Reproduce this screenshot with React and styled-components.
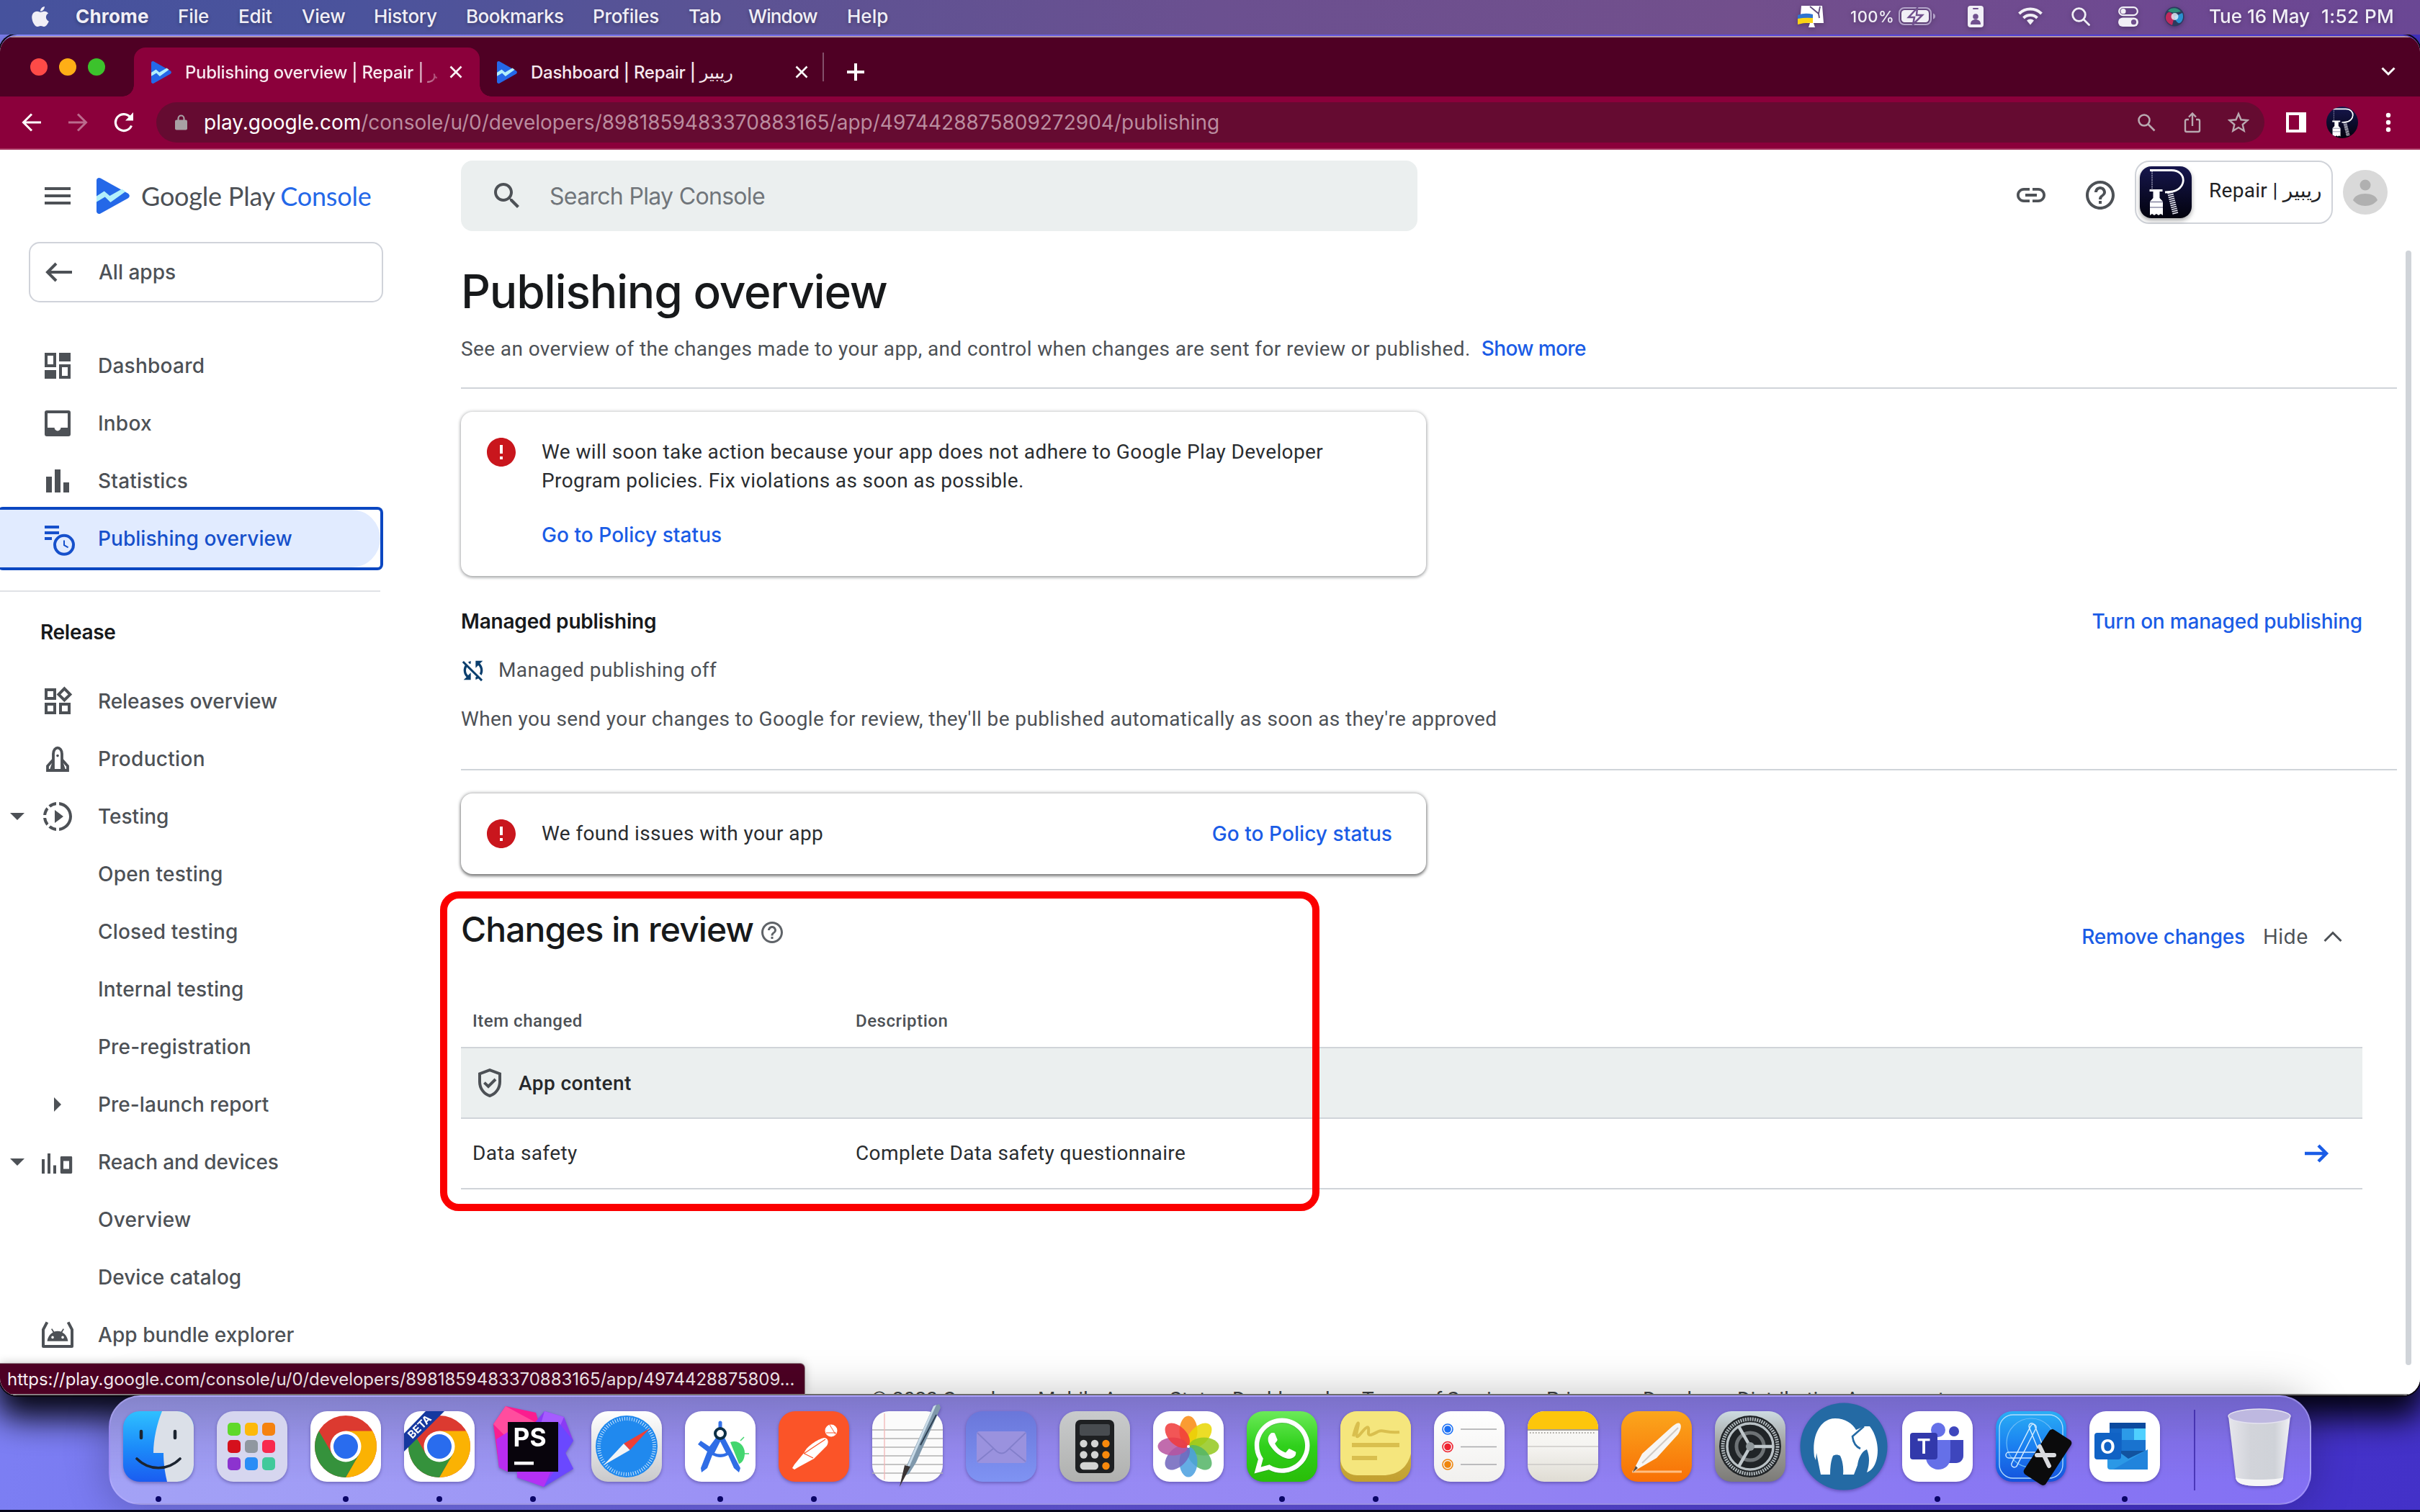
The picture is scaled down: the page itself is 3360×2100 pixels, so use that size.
import React from "react";
import styled, { createGlobalStyle } from "styled-components";
import { FaApple, FaWhatsapp } from "react-icons/fa";

const UI = `Inter, "DejaVu Sans", sans-serif`;
const BODY = `Roboto, "DejaVu Sans", sans-serif`;
const BLUE = "#1a5ce6";
const GREY = "#4d5156";
const INK = "#17191b";
const LINE = "#d0d4d9";

const GlobalStyle = createGlobalStyle`
  * { box-sizing: border-box; }
  body { margin: 0; background: #000; overflow: hidden; }
  svg { display: block; flex: none; }
`;

/* ---------- desktop ---------- */

const Desktop = styled.div`
  position: relative;
  display: flex;
  flex-direction: column;
  width: 3360px;
  height: 2100px;
  overflow: hidden;
  border-bottom: 3px solid #06061a;
  background: linear-gradient(100deg, #8487fb 0%, #7d80f4 8%, #6a60e2 40%, #5c4bdc 65%, #4634cc 90%, #4331c8 100%);
  font-family: ${UI};
`;

const MenuBar = styled.div`
  position: relative;
  z-index: 2;
  display: flex;
  align-items: center;
  height: 48px;
  flex: none;
  padding: 0 38px 3px 40px;
  background: linear-gradient(90deg, #46529d 0%, #4b539c 15%, #5b5394 30%, #6b5090 50%, #724f8c 72%, #6d4892 92%, #6a4794 100%);
  color: #f1eff6;
  font-weight: 500;
  font-size: 26px;
  white-space: pre;
`;

const MenuItem = styled.span`
  width: ${(p) => p.$w}px;
  font-weight: ${(p) => (p.$bold ? 700 : 500)};
  letter-spacing: ${(p) => p.$ls || 0}px;
  text-shadow: 0 2px 5px rgba(0, 0, 0, 0.3);
`;

const AppleSlot = styled.div`
  width: 65px;
  display: flex;
`;

const StatusTray = styled.div`
  display: flex;
  align-items: center;
  margin-left: auto;
  filter: drop-shadow(0 2px 3px rgba(0, 0, 0, 0.25));
`;

const TrayItem = styled.span`
  display: block;
  width: ${(p) => p.$w}px;
  margin-left: ${(p) => p.$gap || 0}px;
  font-size: ${(p) => p.$size || 26}px;
  letter-spacing: ${(p) => p.$ls || 0}px;
`;

/* ---------- browser ---------- */

const BrowserWindow = styled.div`
  position: relative;
  display: flex;
  flex-direction: column;
  height: 1888px;
  flex: none;
  margin-top: 2px;
  border-radius: 22px 22px 24px 24px;
  overflow: hidden;
  background: #fff;
`;

const WindowShadow = styled.div`
  flex: none;
  border-radius: 24px;
  box-shadow: 0 0 0 2px #0b0610, 0 26px 44px 6px rgba(0, 0, 8, 0.95);
`;

const TabStrip = styled.div`
  display: flex;
  align-items: center;
  height: 84px;
  flex: none;
  padding-left: 42px;
  background: #4f0024;
  border-top: 2px solid #b597a4;
`;

const Lights = styled.div`
  display: flex;
  gap: 16px;
  width: 144px;
`;

const Light = styled.i`
  width: 24px;
  height: 24px;
  border-radius: 50%;
  background: ${(p) => p.$c};
`;

const Tab = styled.div`
  position: relative;
  display: flex;
  align-items: center;
  align-self: flex-end;
  width: 480px;
  height: 68px;
  padding: 0 18px 0 24px;
  border-radius: 16px 16px 0 0;
  background: ${(p) => (p.$active ? "#8b003b" : "transparent")};
  color: #fff;
  font-weight: 500;
  font-size: 24px;
  letter-spacing: -0.28px;
  ${(p) =>
    p.$active &&
    `
    &::before, &::after {
      content: "";
      position: absolute;
      bottom: 0;
      width: 16px;
      height: 16px;
    }
    &::before { left: -16px; background: radial-gradient(circle at 0 0, transparent 15.5px, #8b003b 16px); }
    &::after { right: -16px; background: radial-gradient(circle at 100% 0, transparent 15.5px, #8b003b 16px); }
  `}
`;

const TabTitle = styled.span`
  width: 350px;
  margin: 0 17px 0 19px;
  overflow: hidden;
  white-space: pre;
  color: #f6e9ef;
  ${(p) => p.$fade && `mask-image: linear-gradient(90deg, #000 90%, transparent 104%);`}
`;

const TabDivider = styled.i`
  width: 2px;
  height: 40px;
  margin: 0 32px 0 -4px;
  background: #83506a;
`;

const NewTab = styled.div`
  margin: 13px 0 0 -1px;
`;

const ChevronSlot = styled.div`
  margin: 13px 34px 0 auto;
`;

const Toolbar = styled.div`
  display: flex;
  align-items: center;
  height: 74px;
  flex: none;
  padding-left: 20px;
  background: #8b003b;
  border-bottom: 2px solid #a8345f;
`;

const ToolIcon = styled.div`
  display: flex;
  align-items: center;
  justify-content: center;
  width: 48px;
  height: 48px;
  margin-right: 16px;
  opacity: ${(p) => (p.$dim ? 0.42 : 1)};
`;

const Omnibox = styled.div`
  display: flex;
  align-items: center;
  width: 2927px;
  height: 56px;
  margin: 0 20px 0 5px;
  padding: 0 0 0 26px;
  border-radius: 28px;
  background: #650b31;
  color: #ba8c9f;
  font-size: 28px;
`;

const Url = styled.span`
  margin-left: 23px;
  margin-right: auto;
  b {
    font-weight: 400;
    color: #fff;
  }
`;

const OmniIcon = styled.div`
  display: flex;
  justify-content: center;
  width: 64px;
  &:last-child {
    margin-right: 4px;
  }
`;

const ProfileDot = styled.div`
  width: 44px;
  height: 44px;
  margin: 0 38px 0 2px;
  border-radius: 50%;
  overflow: hidden;
`;

/* ---------- page ---------- */

const Page = styled.div`
  position: relative;
  display: grid;
  grid-template-columns: 640px 1fr;
  flex: 1;
  min-height: 0;
  overflow: hidden;
  background: #fff;
  border-bottom: 2px solid #7c7c7c;
`;

const Sidebar = styled.nav`
  display: flex;
  flex-direction: column;
  min-height: 0;
`;

const BrandRow = styled.div`
  display: flex;
  align-items: center;
  height: 128px;
  flex: none;
  padding-left: 56px;
`;

const Brand = styled.div`
  margin-left: 16px;
  font-family: Lato, sans-serif;
  font-size: 36px;
  letter-spacing: -0.2px;
  color: ${GREY};
  span {
    color: #2468e8;
    margin-left: -1px;
  }
`;

const LogoSlot = styled.div`
  margin-left: 30px;
`;

const AllApps = styled.div`
  display: flex;
  align-items: center;
  width: 492px;
  height: 84px;
  flex: none;
  margin: 0 0 48px 40px;
  padding-left: 16px;
  border: 2px solid #d0d3da;
  border-radius: 15px;
  font-weight: 500;
  font-size: 28px;
  color: ${GREY};
  svg {
    margin-right: 31px;
  }
`;

const NavItem = styled.div`
  display: grid;
  grid-template-columns: 56px 48px 1fr;
  align-items: center;
  width: 528px;
  height: 80px;
  flex: none;
  color: ${(p) => (p.$active ? "#1650cb" : GREY)};
  font-weight: 500;
  font-size: 28px;
  letter-spacing: ${(p) => p.$ls ?? 0.05}px;
  ${(p) =>
    p.$active &&
    `
    background: #e1ebff;
    border-radius: 0 40px 40px 0;
  `}
`;

const FocusRing = styled.div`
  width: 536px;
  height: 88px;
  flex: none;
  margin: -4px 0 -4px -4px;
  padding-left: 4px;
  border: 4px solid #0b47c1;
  border-left: 0;
  border-radius: 8px;
`;

const CaretSlot = styled.div`
  padding-left: 14px;
`;

const IconSlot = styled.div`
  display: flex;
  justify-content: center;
`;

const NavLabel = styled.span`
  padding-left: 32px;
`;

const NavDivider = styled.hr`
  width: 528px;
  height: 2px;
  flex: none;
  margin: 32px 0 0;
  border: 0;
  background: #e0e2e6;
`;

const NavHeading = styled.div`
  display: flex;
  align-items: center;
  height: 112px;
  flex: none;
  padding-left: 56px;
  font-weight: 600;
  font-size: 28px;
  letter-spacing: -0.3px;
  color: ${INK};
`;

const Main = styled.main`
  display: flex;
  flex-direction: column;
  min-height: 0;
  min-width: 0;
  padding-right: 32px;
`;

const TopBar = styled.div`
  display: flex;
  align-items: center;
  height: 128px;
  flex: none;
  margin-right: -32px;
  padding-right: 45px;
`;

const SearchBox = styled.div`
  display: flex;
  align-items: center;
  width: 1328px;
  height: 98px;
  padding-left: 40px;
  margin-right: auto;
  border-radius: 16px;
  background: #ebefef;
  color: #70757a;
  font-size: 32px;
  letter-spacing: -0.68px;
  svg {
    margin-right: 35px;
  }
`;

const AppChip = styled.div`
  display: flex;
  align-items: center;
  width: 275px;
  height: 88px;
  margin: 0 14px 10px 24px;
  padding-left: 5px;
  border: 2px solid #d0d3d9;
  border-radius: 20px;
  font-family: ${BODY};
  font-size: 28px;
  letter-spacing: 0.3px;
  color: #202124;
  white-space: pre;
`;

const AppName = styled.span`
  padding-bottom: 5px;
`;

const AppTile = styled.div`
  width: 72px;
  height: 72px;
  margin-right: 24px;
  border-radius: 16px;
  overflow: hidden;
  box-shadow: 0 3px 6px rgba(0, 0, 0, 0.35);
`;

const Avatar = styled.div`
  margin-bottom: 10px;
`;

const HeaderIcon = styled.div`
  margin: 0 0 2px ${(p) => p.$gap || 0}px;
`;

const Title = styled.h1`
  margin: 29px 0 0;
  font-weight: 540;
  font-size: 64px;
  line-height: 80px;
  letter-spacing: -1.2px;
  color: ${INK};
`;

const Text = styled.p`
  margin: ${(p) => p.$mt || 0}px 0 0;
  font-family: ${BODY};
  font-size: 28px;
  line-height: 40px;
  letter-spacing: 0.39px;
  color: ${(p) => (p.$dark ? "#2a2d30" : GREY)};
  white-space: pre;
`;

const Link = styled.a`
  font-family: ${UI};
  font-weight: 500;
  font-size: 28px;
  line-height: 40px;
  letter-spacing: ${(p) => p.$ls || 0}px;
  color: ${BLUE};
  margin-left: ${(p) => p.$ml || 0}px;
`;

const Rule = styled.hr`
  width: 100%;
  height: 2px;
  flex: none;
  margin: ${(p) => p.$mt}px 0 0;
  border: 0;
  background: ${LINE};
`;

const Notice = styled.section`
  display: flex;
  align-items: ${(p) => (p.$single ? "center" : "flex-start")};
  width: 1340px;
  height: ${(p) => (p.$single ? 112 : 228)}px;
  flex: none;
  margin-top: 32px;
  padding: ${(p) => (p.$single ? "0 47px 0 32px" : "32px 48px 0 32px")};
  border-radius: 16px;
  background: #fff;
  box-shadow: ${(p) =>
    p.$single
      ? "0 3px 4px rgba(0,0,0,.42), 0 0 4px 1px rgba(60,64,67,.38)"
      : "0 2px 4px rgba(60,64,67,.38), 0 0 4px 1px rgba(60,64,67,.22)"};
`;

const NoticeBody = styled.div`
  display: flex;
  flex-direction: ${(p) => (p.$row ? "row" : "column")};
  justify-content: space-between;
  align-items: ${(p) => (p.$row ? "center" : "flex-start")};
  flex: 1;
  height: ${(p) => (p.$row ? "auto" : "159px")};
  padding: ${(p) => (p.$row ? 0 : 4)}px 0 0 32px;
`;

const SectionRow = styled.div`
  display: flex;
  align-items: ${(p) => p.$align || "center"};
  justify-content: space-between;
  flex: none;
  margin-top: ${(p) => p.$mt}px;
  padding-right: 48px;
`;

const SmallHeading = styled.h3`
  margin: 0;
  font-weight: 600;
  font-size: 28px;
  line-height: 40px;
  letter-spacing: -0.2px;
  color: ${INK};
`;

const StatusLine = styled.div`
  display: flex;
  align-items: center;
  height: 40px;
  flex: none;
  margin: 28px 0 0 -3px;
  gap: 15px;
`;

const SectionTitle = styled.h2`
  display: flex;
  align-items: center;
  gap: 8px;
  margin: 0;
  font-weight: 540;
  font-size: 48px;
  line-height: 60px;
  letter-spacing: -0.95px;
  color: ${INK};
  svg {
    margin-top: 8px;
  }
`;

const Actions = styled.div`
  display: flex;
  align-items: center;
  padding: 20px 28px 0 0;
`;

const Hide = styled.span`
  margin: 0 21px 0 25px;
  font-size: 28px;
  letter-spacing: 0.5px;
  line-height: 40px;
  color: ${GREY};
`;

const Table = styled.div`
  display: flex;
  flex-direction: column;
  flex: none;
  margin: 61px 48px 0 0;
`;

const TableHead = styled.div`
  display: grid;
  grid-template-columns: 532px 1fr;
  align-items: center;
  height: 72px;
  padding-left: 16px;
  font-family: ${BODY};
  font-weight: 500;
  font-size: 24px;
  letter-spacing: 0.52px;
  color: ${GREY};
`;

const GroupRow = styled.div`
  display: flex;
  align-items: center;
  gap: 16px;
  height: 98px;
  padding-left: 16px;
  border-top: 2px solid ${LINE};
  background: #ebefef;
  font-family: ${BODY};
  font-weight: 500;
  font-size: 28px;
  letter-spacing: 0.42px;
  color: #26282b;
`;

const DataRow = styled.div`
  display: grid;
  grid-template-columns: 532px 1fr 48px;
  align-items: center;
  height: 100px;
  padding: 0 40px 0 16px;
  border-top: 2px solid ${LINE};
  border-bottom: 2px solid ${LINE};
`;

const Footer = styled.footer`
  display: flex;
  flex: none;
  margin-top: 272px;
  padding-left: 570px;
  font-family: ${BODY};
  font-size: 28px;
  line-height: 40px;
  color: #3c4043;
  white-space: pre;
`;

const FooterItem = styled.span`
  width: ${(p) => p.$w}px;
`;

const ScrollThumb = styled.div`
  position: absolute;
  right: 12px;
  top: 140px;
  width: 8px;
  height: 1548px;
  border-radius: 4px;
  background: #d0d4d9;
`;

const Highlight = styled.div`
  position: absolute;
  left: 611px;
  top: 1238px;
  width: 1221px;
  height: 444px;
  border: 10px solid #fb0000;
  border-radius: 26px;
`;

const StatusBubble = styled.div`
  position: absolute;
  left: 0;
  bottom: 2px;
  width: 1117px;
  height: 42px;
  padding-left: 10px;
  border-radius: 0 6px 0 0;
  background: #4d0024;
  box-shadow: 0 0 0 1px #9a8a90, 0 0 14px rgba(0, 0, 0, 0.25);
  color: #f6edf1;
  font-size: 24px;
  line-height: 43px;
  letter-spacing: -0.03px;
  white-space: nowrap;
`;

/* ---------- dock ---------- */

const DockBar = styled.div`
  position: absolute;
  left: 151px;
  top: 1938px;
  display: flex;
  width: 3058px;
  height: 152px;
  padding-left: 5px;
  border: 2px solid rgba(190, 180, 255, 0.45);
  border-radius: 44px;
  background: linear-gradient(180deg, rgba(70, 70, 110, 0.32) 0%, rgba(90, 80, 150, 0.12) 45%, transparent 80%),
    linear-gradient(90deg, #a3a2f6 0%, #9a90f5 30%, #9484f3 60%, #8370f3 100%);
  box-shadow: 0 0 60px rgba(0, 0, 0, 0.26);
`;

const DockSlot = styled.div`
  display: flex;
  flex-direction: column;
  align-items: center;
  width: 130px;
  padding-top: 19px;
  margin-left: -3px;
  margin-right: 3px;
  svg {
    overflow: visible;
    filter: drop-shadow(0 2px 2px rgba(20, 10, 80, 0.35));
  }
`;

const RunningDot = styled.i`
  width: 8px;
  height: 8px;
  margin-top: 19px;
  border-radius: 50%;
  background: #0a0566;
`;

const DockDivider = styled.i`
  width: 2px;
  height: 112px;
  margin: 18px 27px 0 28px;
  background: rgba(50, 30, 160, 0.7);
`;

/* ---------- icons ---------- */

const Glyph = ({ size = 48, color = GREY, children, ...rest }) => (
  <svg width={size} height={size} viewBox="0 0 24 24" fill={color} {...rest}>
    {children}
  </svg>
);

const Stroke = ({ size = 48, color = GREY, w = 2, children, ...rest }) => (
  <svg width={size} height={size} viewBox="0 0 24 24" fill="none" stroke={color} strokeWidth={w} {...rest}>
    {children}
  </svg>
);

const P = {
  menu: "M3 18h18v-2H3v2zm0-5h18v-2H3v2zm0-7v2h18V6H3z",
  search:
    "M15.5 14h-.79l-.28-.27C15.41 12.59 16 11.11 16 9.5 16 5.91 13.09 3 9.5 3S3 5.91 3 9.5 5.91 16 9.5 16c1.61 0 3.09-.59 4.23-1.57l.27.28v.79l5 4.99L20.49 19l-4.99-5zm-6 0C7.01 14 5 11.99 5 9.5S7.01 5 9.5 5 14 7.01 14 9.5 11.99 14 9.5 14z",
  link: "M3.9 12c0-1.71 1.39-3.1 3.1-3.1h4V7H7c-2.76 0-5 2.24-5 5s2.24 5 5 5h4v-1.9H7c-1.71 0-3.1-1.39-3.1-3.1zM8 13h8v-2H8v2zm9-6h-4v1.9h4c1.71 0 3.1 1.39 3.1 3.1s-1.39 3.1-3.1 3.1h-4V17h4c2.76 0 5-2.24 5-5s-2.24-5-5-5z",
  help: "M11 18h2v-2h-2v2zm1-16C6.48 2 2 6.48 2 12s4.48 10 10 10 10-4.48 10-10S17.52 2 12 2zm0 18c-4.41 0-8-3.59-8-8s3.59-8 8-8 8 3.59 8 8-3.59 8-8 8zm0-14c-2.21 0-4 1.79-4 4h2c0-1.1.9-2 2-2s2 .9 2 2c0 2-3 1.75-3 5h2c0-2.25 3-2.5 3-5 0-2.21-1.79-4-4-4z",
  error: "M12 2C6.48 2 2 6.48 2 12s4.48 10 10 10 10-4.48 10-10S17.52 2 12 2zm1 15h-2v-2h2v2zm0-4h-2V7h2v6z",
  slowMotion:
    "M13.05 9.79 10 7.5v9l3.05-2.29L16 12l-2.95-2.21zM11 4.07V2.05c-2.01.2-3.84 1-5.32 2.21L7.1 5.69A7.94 7.94 0 0 1 11 4.07zM5.69 7.1 4.26 5.68A9.95 9.95 0 0 0 2.05 11h2.02c.18-1.46.76-2.79 1.62-3.9zM4.07 13H2.05c.2 2.01 1 3.84 2.21 5.32l1.43-1.43A7.868 7.868 0 0 1 4.07 13zm1.61 6.74A9.98 9.98 0 0 0 11 21.95v-2.02a7.94 7.94 0 0 1-3.9-1.62l-1.42 1.43zM22 12c0 5.16-3.92 9.42-8.95 9.95v-2.02C16.97 19.41 20 16.05 20 12s-3.03-7.41-6.95-7.93V2.05C18.08 2.58 22 6.84 22 12z",
  syncOff:
    "M10 6.35V4.26c-.8.21-1.55.54-2.23.96l1.46 1.46c.25-.12.5-.24.77-.33zm-7.14-.94l2.36 2.36C4.45 8.99 4 10.44 4 12c0 2.21.91 4.2 2.36 5.64L4 20h6v-6l-2.24 2.24C6.68 15.15 6 13.66 6 12c0-1 .25-1.94.68-2.77l8.08 8.08c-.25.13-.5.25-.77.34v2.09c.8-.21 1.55-.54 2.23-.96l2.36 2.36 1.27-1.27L4.14 4.14 2.86 5.41zM20 4h-6v6l2.24-2.24C17.32 8.85 18 10.34 18 12c0 1-.25 1.94-.68 2.77l1.46 1.46C19.55 15.01 20 13.56 20 12c0-2.21-.91-4.2-2.36-5.64L20 4z",
};

const NAV_ICONS = {
  dashboard: (
    <Glyph>
      <path fillRule="evenodd" d="M3 3h8v10H3zM5 5v6h4V5zM13 3h8v6h-8zM3 15h8v6H3zM13 11h8v10h-8zM15 13v6h4v-6z" />
    </Glyph>
  ),
  inbox: (
    <Glyph>
      <path fillRule="evenodd" d="M4.5 3h15A1.5 1.5 0 0 1 21 4.5v15a1.5 1.5 0 0 1-1.5 1.5h-15A1.5 1.5 0 0 1 3 19.5v-15A1.5 1.5 0 0 1 4.5 3zM5 5h14v10h-4.8a2.2 2.2 0 0 1-4.4 0H5z" />
    </Glyph>
  ),
  stats: (
    <Glyph>
      <path d="M4 9h4v11H4zM10 4h4v16h-4zM16 13h4v7h-4z" />
    </Glyph>
  ),
  publish: (
    <Glyph color="#1650cb">
      <path d="M3 3h10v2H3zM3 7h10v2H3zM3 11h5v2H3z" />
      <circle cx="16.5" cy="16.4" r="6.5" fill="#e1ebff" stroke="#1650cb" strokeWidth="2" />
      <path d="M16.5 13.2v3.4l2.8 1.6" fill="none" stroke="#1650cb" strokeWidth="1" />
    </Glyph>
  ),
  releases: (
    <Glyph>
      <path fillRule="evenodd" d="M3 3h8v8H3zM5 5v4h4V5zM3 13h8v8H3zM5 15v4h4v-4zM13 13h8v8h-8zM15 15v4h4v-4zM16.7 1.8 22.1 7.2 16.7 12.6 11.3 7.2zM16.7 4.6 14.1 7.2 16.7 9.8 19.3 7.2z" />
    </Glyph>
  ),
  production: (
    <Stroke w={1.9}>
      <path d="M9 20V8.5C9 6 10.5 4.300 12 4.3S15 6 15 8.500V20M9 12.500 5 17v3h14v-3l-4-4.500" />
      <circle cx="12" cy="9.8" r=".9" fill={GREY} stroke="none" />
      <path d="M8.5 15.5 7 20M15.5 15.5 17 20" strokeWidth="1.2" />
    </Stroke>
  ),
  testing: (
    <Glyph>
      <path d={P.slowMotion} />
    </Glyph>
  ),
  reach: (
    <Glyph>
      <path fillRule="evenodd" d="M1 10h2v10H1zM5 6h2v14H5zM9 14.3h2V20H9zM14.6 8h6.8a.7.7 0 0 1 .7.7v10.6a.7.7 0 0 1-.7.7h-6.8a.7.7 0 0 1-.7-.7V8.700a.7.7 0 0 1 .7-.7zM16 11.200v5.600h4v-5.600z" />
    </Glyph>
  ),
  bundle: (
    <Glyph>
      <path d="M4.7 3.2 2 8.3V20h20V8.3L19.3 3.2" fill="none" stroke={GREY} strokeWidth="2" strokeLinejoin="round" />
      <path fillRule="evenodd" d="M4.8 16.4c.3-3 2-5.1 4-6.2L7.5 8l.7-.4 1.4 2.2a8 8 0 0 1 4.8 0l1.4-2.2.7.4-1.3 2.2c2 1.1 3.7 3.2 4 6.2zM8.5 12.8a.9.9 0 1 0 .01 1.8.9.9 0 0 0 0-1.8zM15.5 12.8a.9.9 0 1 0 .01 1.8.9.9 0 0 0 0-1.8z" />
    </Glyph>
  ),
};

const CaretDown = () => (
  <svg width="20" height="10" viewBox="0 0 20 10">
    <path d="M0 0h20L10 10z" fill={GREY} />
  </svg>
);

const CaretRight = () => (
  <svg width="10" height="20" viewBox="0 0 10 20">
    <path d="M0 0v20l10-10z" fill={GREY} />
  </svg>
);

const PlayLogo = ({ w, h }) => (
  <svg width={w} height={h} viewBox="0 0 45 50" preserveAspectRatio="none">
    <path d="M0 3.5C0 .6 3 -.8 5.5.6L42.500 21.500c3 1.800 3 5.400 0 7.100L5.500 49.400C3 50.800 0 49.400 0 46.500z" fill="#2468e8" />
    <path d="M0 25.5 10.500 18.500l7.500 6.500L34.500 15.500l5 3.500L19 34l-7.500-7.500L0 33.500z" fill="#b3f0fb" />
  </svg>
);

const RepairMark = ({ size }) => (
  <svg width={size} height={size} viewBox="0 0 72 72">
    <defs>
      <linearGradient id="navy" x1="0" y1="0" x2="0" y2="1">
        <stop offset="0" stopColor="#16164d" />
        <stop offset="1" stopColor="#02020d" />
      </linearGradient>
    </defs>
    <rect width="72" height="72" fill="url(#navy)" />
    <path d="M14 5.5h30c22 0 22 28-2 30l-7 .5" fill="none" stroke="#fff" strokeWidth="2.8" />
    <path d="M17 7v25" stroke="#c9c9e0" strokeWidth="1.2" strokeDasharray="1.5 1" />
    <path d="M13.5 32h18v3h-4v9l4.500 5v19l-3-2-3 2-3-2-3 2-3-2-3 2V49l4.500-5v-9h-5z" fill="#fff" />
    <path d="M14 49.5h18M14 57h18" stroke="#55557a" strokeWidth="1" />
    <path d="M42 36 49.5 66" stroke="#e4e4ef" strokeWidth="8" strokeDasharray="1.6 1.3" />
  </svg>
);

/* ---------- dock drawings, each on a 100 x 100 tile ---------- */

const Tile = ({ children, fill = "#fff", id, stops }) => (
  <svg width="100" height="100" viewBox="0 0 100 100">
    {stops && (
      <defs>
        <linearGradient id={id} x1="0" y1="0" x2="0" y2="1">
          {stops.map((c, i) => (
            <stop key={i} offset={i / (stops.length - 1)} stopColor={c} />
          ))}
        </linearGradient>
      </defs>
    )}
    <rect x="1" y="1" width="98" height="98" rx="23" fill={stops ? `url(#${id})` : fill} />
    {children}
  </svg>
);

const ChromeDisc = () => (
  <>
    <circle cx="50" cy="50" r="43" fill="#dc3a30" />
    <path d="M87.2 28.5H50L68.6 60.75 50 93A43 43 0 0 0 87.2 28.5z" fill="#fbb203" />
    <path d="M50 93 68.6 60.75H31.4L12.8 28.5A43 43 0 0 0 50 93z" fill="#35923c" />
    <circle cx="50" cy="50" r="21.5" fill="#fff" />
    <circle cx="50" cy="50" r="17" fill="#296cee" />
  </>
);

const Finder = () => (
  <Tile id="dk-finder" stops={["#2fc0ff", "#1c8dfa", "#1a5cf0"]}>
    <path d="M55 1h21a23 23 0 0 1 23 23v52a23 23 0 0 1-23 23H62c-3-12-5-26-5-40H43C43 40 48 18 55 1z" fill="#dbe0e8" />
    <path d="M26 29v9M73 29v9" stroke="#1b2430" strokeWidth="4.5" strokeLinecap="round" />
    <path d="M20 67c17 17 43 17 60 0" fill="none" stroke="#1b2430" strokeWidth="3.6" strokeLinecap="round" />
  </Tile>
);

const PAD = ["#5fd92b", "#fdb90a", "#f5820f", "#d5101c", "#9097a0", "#f8294d", "#8c33cf", "#2a8df6", "#41c99a"];
const Launchpad = () => (
  <Tile fill="#d6d6ef">
    {PAD.map((c, i) => (
      <rect key={i} x={16 + (i % 3) * 24} y={17 + Math.floor(i / 3) * 24} width="18" height="18" rx="5" fill={c} />
    ))}
  </Tile>
);

const Chrome = () => (
  <Tile>
    <ChromeDisc />
  </Tile>
);

const ChromeBeta = () => (
  <Tile>
    <ChromeDisc />
    <path d="M31 1h26L1 57V32z" fill="#15389f" />
    <text x="22" y="28" transform="rotate(-45 22 22)" fill="#fff" fontFamily="Inter, sans-serif" fontWeight="700" fontSize="15" textAnchor="middle">
      BETA
    </text>
  </Tile>
);

const PhpStorm = () => (
  <svg width="100" height="100" viewBox="0 0 100 100">
    <path d="M12-6 54 3l6 20L15 85l-12-6-8-60z" fill="#fb1d8f" />
    <path d="M12-6-5 19l20 20L60 20z" fill="#ff4d9e" />
    <path d="M50 20 66 1l27 8 13 33-11 17 11 22-41 25-37-13V60z" fill="#8a3bf4" />
    <path d="M66 1 93 9 84 30 60 22z" fill="#a65bff" />
    <path d="M85 16 106 42 95 59l11 22-41 25 20-30z" fill="#6a48ff" />
    <path d="M-1 40 15 30v55l-12-6z" fill="#b92cf0" />
    <path d="M28 84v9l37 13 10-22z" fill="#b431f3" />
    <rect x="15" y="16" width="70" height="69" fill="#08040c" />
    <text x="22.5" y="50" fill="#fff" fontFamily="Inter, sans-serif" fontWeight="700" fontSize="36" textLength="46" lengthAdjust="spacingAndGlyphs">
      PS
    </text>
    <rect x="24" y="71" width="27" height="4.5" fill="#fff" />
  </svg>
);

const Safari = () => (
  <Tile id="dk-safari" stops={["#ffffff", "#c9c9cb"]}>
    <circle cx="50" cy="50" r="43" fill="#2089ee" />
    <circle cx="50" cy="50" r="38.5" fill="none" stroke="#cfe8fd" strokeWidth="5" strokeDasharray="1 2.36" />
    <path d="M82 25 54.5 55 46 46z" fill="#ee3f37" />
    <path d="M18 76 46 46l8.5 9z" fill="#f2f4f6" />
  </Tile>
);

const AndroidStudio = () => (
  <Tile>
    <path d="M64 44c12-4 20 6 20 15s-4 14-8 15z" fill="#43d66f" />
    <path d="M78 42l5-5M82 60h8" stroke="#43d66f" strokeWidth="1.5" />
    <path d="M50 17v8" stroke="#3573ea" strokeWidth="5" strokeLinecap="round" />
    <path d="M44 38h12l22 42-2 6-7-6-8-18c-8 4-14 4-22 0l-7 18-8 6-1-6 9-23-13-10 4-5 12 8z" fill="#2f6de6" />
    <path d="M50 43 42 59q8 3 16 0z" fill="#fff" />
    <circle cx="50" cy="32" r="7" fill="#fff" stroke="#0c2f45" strokeWidth="4" />
  </Tile>
);

const Postman = () => (
  <Tile fill="#fb5428">
    <circle cx="74" cy="28" r="8.5" fill="#fff" />
    <path d="M72 20 80 33M67 31h14" stroke="#fb5428" strokeWidth="1" />
    <path d="M64 38c6 0 7 6 4 11L50 67 28 79l-5 3-3-2 3-5 14-17c3-8 18-18 27-20z" fill="#fff" />
    <path d="M36 60 66 40M37 60l12 6" stroke="#fb5428" strokeWidth="1.3" />
  </Tile>
);

const TextEdit = () => (
  <Tile fill="#fbfbfb">
    <path d="M1 27h98M1 39h98M1 51h98M1 63h98M1 75h98M1 87h98" stroke="#b3b3b3" strokeWidth="1.3" />
    <path d="M18 4v92" stroke="#f2b5b5" strokeWidth="1.3" />
    <path d="M86-6 94-9 96-4 62 72 52 88 42 92z" fill="#7f98ab" />
    <path d="M86-6 90-8 50 84 44 90z" fill="#c9dbe8" />
    <path d="M54 78 39 106 46 76z" fill="#3a3434" />
    <path d="M90 6 68 48" stroke="#2c3e50" strokeWidth="1.8" />
  </Tile>
);

const MailApp = () => (
  <Tile id="dk-mail" stops={["#6a77da", "#7f93f3"]}>
    <rect x="16" y="29" width="69" height="44" rx="4" fill="#9a92de" />
    <path d="M17 31 44 57q7 5 13 0L84 31M17 71 39 53M84 71 62 53" fill="none" stroke="#837fcb" strokeWidth="1.8" />
  </Tile>
);

const Calculator = () => (
  <Tile id="dk-calc" stops={["#c9cbcc", "#b0b1af"]}>
    <rect x="23" y="13" width="54" height="74" rx="7" fill="#1e2022" />
    <rect x="29" y="19" width="42" height="16" rx="3" fill="#484c50" />
    {[0, 1, 2].map((r) =>
      [0, 1, 2].map((c) =>
        r === 2 && c < 2 ? null : (
          <circle key={`${r}${c}`} cx={34.5 + c * 15.5} cy={46 + r * 15.5} r="5.2" fill={c === 2 ? "#f8890c" : "#d3d4d3"} />
        )
      )
    )}
    <rect x="29.5" y="71.8" width="25.5" height="10.4" rx="5.2" fill="#d3d4d3" />
  </Tile>
);

const PETALS = ["#f98a12", "#e9d704", "#94c81f", "#54b567", "#4a9fe0", "#7065bd", "#b7549f", "#f03a3a"];
const Photos = () => (
  <Tile>
    {PETALS.map((c, i) => (
      <ellipse key={i} cx="50" cy="28.5" rx="12.5" ry="21" fill={c} fillOpacity="0.86" transform={`rotate(${i * 45} 50 50)`} />
    ))}
    <circle cx="50" cy="50" r="2" fill="#fff" />
  </Tile>
);

const WhatsApp = () => (
  <Tile id="dk-wa" stops={["#6bea58", "#2fd01b", "#29bd08"]}>
    <FaWhatsapp x="6" y="5" size={88} color="#fff" />
  </Tile>
);

const Stickies = () => (
  <Tile id="dk-st1" stops={["#d8c15a", "#c2a02f"]}>
    <path d="M1 24A23 23 0 0 1 24 1h52a23 23 0 0 1 23 23v36C94 80 80 90 60 90H24A23 23 0 0 1 1 67z" fill="#f5e67d" />
    <path d="M19 36c4-16 9-26 6-12s-2 16 6 6 10-8 9 0 8 2 14-1 12 3 29 1" fill="none" stroke="#d9bf4e" strokeWidth="4" />
    <path d="M17 48h66M17 66h35" stroke="#d9bf4e" strokeWidth="6" />
  </Tile>
);

const Reminders = () => (
  <Tile id="dk-rem" stops={["#ffffff", "#f1f0ee"]}>
    {["#1a6ff5", "#ef2330", "#ef850c"].map((c, i) => (
      <g key={c}>
        <circle cx="20" cy={26 + i * 24.5} r="7" fill="none" stroke={c} strokeWidth="1.6" />
        <circle cx="20" cy={26 + i * 24.5} r="4.8" fill={c} />
        <path d={`M38 ${26 + i * 24.5}h50`} stroke="#a9a9ab" strokeWidth="1.6" />
      </g>
    ))}
  </Tile>
);

const Notes = () => (
  <Tile id="dk-notes" stops={["#fbfaf8", "#f5f4f1", "#dfdcd3"]}>
    <path d="M1 26v-2A23 23 0 0 1 24 1h52a23 23 0 0 1 23 23v2z" fill="#fdc60b" />
    <path d="M1 27h98" stroke="#8a8578" strokeWidth="1.3" />
    <path d="M4 31h92" stroke="#a5a29b" strokeWidth="2" strokeDasharray="1.5 2.5" />
    <path d="M1 50h98M1 75h98" stroke="#cbc9c6" strokeWidth="1.6" />
  </Tile>
);

const Pages = () => (
  <Tile id="dk-pages" stops={["#fba61c", "#f87006"]}>
    <path d="M16 85h69" stroke="#ffbe83" strokeWidth="3" />
    <path d="M83 19c2 3 0 9-3 14L50 66 26 80l-9 6 4-9 9-17 42-38c5-4 9-6 11-3z" fill="#f7f5f3" />
    <path d="M80 24 30 73" stroke="#cfc9c3" strokeWidth="2" />
    <path d="M17 86l7-6-3-3z" fill="#5a4b3f" />
  </Tile>
);

const Settings = () => (
  <Tile id="dk-set" stops={["#cddbe2", "#9c9c99", "#7c7b77"]}>
    <circle cx="50" cy="50" r="43" fill="#202427" />
    <circle cx="50" cy="50" r="38" fill="none" stroke="#aeb6ba" strokeWidth="5" strokeDasharray="2 1.3" />
    <circle cx="50" cy="50" r="32" fill="none" stroke="#b9c1c5" strokeWidth="3.5" />
    <circle cx="50" cy="50" r="19" fill="none" stroke="#6d7275" strokeWidth="5" />
    <path d="M50 50h32M50 50 34 22M50 50 34 78" stroke="#bfc7cb" strokeWidth="4.5" />
    <circle cx="50" cy="50" r="6" fill="#8f979b" />
  </Tile>
);

const Mamp = () => (
  <svg width="100" height="100" viewBox="0 0 100 100">
    <circle cx="50" cy="50" r="60.5" fill="#246aa4" />
    <path d="M9 64C5 34 18 11 38 11c14 0 24 7 29 16L78 22l8 0c8 10 11 24 11 33 0 18-7 28-15 31 4-12 4-22 0-32-8 3-12 14-13 22l-5 13H49c1-10-1-20-4-26-3-2-7-2-10 0-3 7-4 16-4 26H18l-6-30-1 10z" fill="#fff" />
    <path d="M78 22 62 36c1 8 4 14 11 17" fill="none" stroke="#246aa4" strokeWidth="2.6" />
  </svg>
);

const Teams = () => (
  <Tile>
    <circle cx="51" cy="27" r="10" fill="#6570e8" />
    <circle cx="73" cy="29" r="7" fill="#3e46bd" />
    <path d="M66 41h20v22c0 6-5 10-10 10h-10z" fill="#3e46bd" />
    <path d="M34 41h34v24c0 11-8 17-17 17s-17-8-17-17z" fill="#6570e8" />
    <rect x="12" y="31" width="38" height="37" rx="4" fill="#3239ab" />
    <text x="31" y="60" fill="#fff" fontFamily="Inter, sans-serif" fontWeight="600" fontSize="29" textAnchor="middle">
      T
    </text>
  </Tile>
);

const Simulator = () => (
  <Tile id="dk-sim" stops={["#2aaef5", "#1a7ff0", "#1552dd"]}>
    <rect x="6" y="6" width="88" height="88" rx="19" fill="none" stroke="#b3dcfb" strokeWidth="1.3" />
    <circle cx="50" cy="45" r="34" fill="none" stroke="#6cbcf8" strokeWidth="1.2" />
    <g fill="none" stroke="#cfe9ff" strokeWidth="1.5">
      <rect x="36" y="16" width="8" height="66" rx="4" transform="rotate(27 40 49)" />
      <rect x="56" y="16" width="8" height="56" rx="4" transform="rotate(-22 60 44)" />
      <rect x="15" y="58" width="70" height="8" rx="4" />
    </g>
    <rect x="55" y="28" width="36" height="74" rx="5" fill="#0b0b0c" transform="rotate(33 73 65)" />
    <path d="M62 50 75 77M58 62h24" stroke="#d9dade" strokeWidth="6" strokeLinecap="round" />
  </Tile>
);

const Outlook = () => (
  <Tile>
    <rect x="29" y="17" width="50" height="9" fill="#0c4a9e" />
    <rect x="29" y="25" width="18" height="40" fill="#1466c6" />
    <rect x="46" y="25" width="18" height="20" fill="#2c9ae8" />
    <rect x="63" y="25" width="16" height="16" fill="#4fd0ff" />
    <rect x="46" y="41" width="33" height="24" fill="#1973cf" />
    <path d="M26 56 82 56 82 82H30a4 4 0 0 1-4-4z" fill="#2b98e6" />
    <path d="M40 56h38L55 67z" fill="#12539f" />
    <path d="M82 54v28H34z" fill="#2184dc" />
    <rect x="8" y="31" width="37" height="37" rx="4" fill="#1062c4" />
    <text x="26.5" y="59.5" fill="#fff" fontFamily="Inter, sans-serif" fontWeight="700" fontSize="27" textAnchor="middle">
      O
    </text>
  </Tile>
);

const Trash = () => (
  <svg width="100" height="100" viewBox="0 0 100 100">
    <defs>
      <linearGradient id="dk-trash" x1="0" x2="1" y1="0" y2="0">
        <stop offset="0" stopColor="#e6e6ec" />
        <stop offset="0.35" stopColor="#d2d4da" />
        <stop offset="0.75" stopColor="#cfd2d8" />
        <stop offset="1" stopColor="#f1f1f5" />
      </linearGradient>
    </defs>
    <path d="M7 8 17 93c1 8 9 12 33 12s32-4 33-12L93 8z" fill="url(#dk-trash)" />
    <path d="M17 93c1 8 9 12 33 12s32-4 33-12c-8 4-58 4-66 0z" fill="#f5f5f7" />
    <ellipse cx="50" cy="8" rx="43" ry="10" fill="#beb8e0" stroke="#e4e2f0" strokeWidth="1.5" />
  </svg>
);

const DOCK = [
  [Finder, true], [Launchpad], [Chrome, true], [ChromeBeta, true], [PhpStorm, true], [Safari], [AndroidStudio, true],
  [Postman, true], [TextEdit], [MailApp], [Calculator], [Photos], [WhatsApp, true], [Stickies, true], [Reminders],
  [Notes], [Pages], [Settings], [Mamp], [Teams, true], [Simulator], [Outlook, true],
];

/* ---------- data ---------- */

const MENUS = [
  ["Chrome", 142, 0.19, true],
  ["File", 84, -0.1],
  ["Edit", 88, -0.1],
  ["View", 100, -0.2],
  ["History", 128, -0.28],
  ["Bookmarks", 176, -0.48],
  ["Profiles", 133, -0.3],
  ["Tab", 83, -0.2],
  ["Window", 137, -0.9],
  ["Help", 70, 0],
];

const NAV_TOP = [
  ["Dashboard", "dashboard", 0.25],
  ["Inbox", "inbox", 0.2],
  ["Statistics", "stats", 0.2],
];

const NAV_RELEASE = [
  { label: "Releases overview", icon: "releases", ls: -0.05 },
  { label: "Production", icon: "production", ls: 0.3 },
  { label: "Testing", icon: "testing", open: true, ls: 0 },
  { label: "Open testing", ls: 0.2 },
  { label: "Closed testing", ls: 0.15 },
  { label: "Internal testing", ls: 0.15 },
  { label: "Pre-registration", ls: 0.15 },
  { label: "Pre-launch report", closed: true },
  { label: "Reach and devices", icon: "reach", open: true, ls: -0.1 },
  { label: "Overview", ls: 0.3 },
  { label: "Device catalog" },
  { label: "App bundle explorer", icon: "bundle" },
];

const FOOTER = [
  ["© 2023 Google", 231],
  ["Mobile App", 183],
  ["Status Dashboard", 267],
  ["Terms of Service", 256],
  ["Privacy", 134],
  ["Developer Distribution Agreement", 430],
];

/* ---------- parts ---------- */

const CloseX = () => (
  <svg width="18" height="18" viewBox="0 0 18 18" stroke="#fff" strokeWidth="2.6">
    <path d="M1.5 1.5l15 15M16.5 1.5l-15 15" />
  </svg>
);

const SystemMenu = () => (
  <MenuBar>
    <AppleSlot>
      <FaApple size={32} color="#f1eff6" />
    </AppleSlot>
    {MENUS.map(([label, w, ls, bold]) => (
      <MenuItem key={label} $w={w} $ls={ls} $bold={bold}>
        {label}
      </MenuItem>
    ))}
    <StatusTray>
      <TrayItem $w={37}>
        <svg width="38" height="32" viewBox="0 0 38 32">
          <path d="M5 1h29l2 24H22l2 6h-9l2-6H3z" fill="#fff" />
          <path d="M17 2l12 10 2-10M29 12l1 6" stroke="#5d4a7c" strokeWidth="1.8" fill="none" />
          <path d="M0 14q10-4 21-1v7H0z" fill="#2f74d0" />
          <path d="M0 19q10-2 21-1v7q-11-1-21 2z" fill="#fbd414" />
        </svg>
      </TrayItem>
      <TrayItem $w={58} $gap={36} $size={22} $ls={0.5}>
        100%
      </TrayItem>
      <TrayItem $w={52} $gap={9}>
        <svg width="52" height="26" viewBox="0 0 52 26">
          <rect x="1" y="1" width="44" height="23" rx="7" fill="none" stroke="#b3a3c9" strokeWidth="2" />
          <rect x="4" y="4" width="38" height="17" rx="4.5" fill="#f1eff6" />
          <path d="M48 8.5v8q3-1 3-4t-3-4z" fill="#b3a3c9" />
          <path d="M26 1 14 14h8l-2 10 13-13h-8z" fill="#f1eff6" stroke="#70508e" strokeWidth="2.5" />
        </svg>
      </TrayItem>
      <TrayItem $w={22} $gap={44}>
        <svg width="22" height="30" viewBox="0 0 22 30">
          <rect width="22" height="30" rx="4" fill="#f1eff6" />
          <rect x="7" y="3" width="8" height="2" rx="1" fill="#70508e" />
          <circle cx="11" cy="15" r="3.8" fill="#70508e" />
          <path d="M4 26c0-5 3-7 7-7s7 2 7 7z" fill="#70508e" />
        </svg>
      </TrayItem>
      <TrayItem $w={34} $gap={48}>
        <svg width="34" height="25" viewBox="0 0 34 25" fill="none" stroke="#f1eff6" strokeWidth="4">
          <path d="M1.5 9a22 22 0 0 1 31 0" />
          <path d="M7.5 15a13.5 13.5 0 0 1 19 0" />
          <path d="M12 18.5a7 7 0 0 1 10 0l-5 6z" fill="#f1eff6" stroke="none" />
        </svg>
      </TrayItem>
      <TrayItem $w={26} $gap={40}>
        <svg width="26" height="26" viewBox="0 0 26 26" fill="none" stroke="#f1eff6" strokeWidth="2.8">
          <circle cx="10.5" cy="10.5" r="8.8" />
          <path d="M17 17l7.5 7.5" strokeLinecap="round" />
        </svg>
      </TrayItem>
      <TrayItem $w={28} $gap={39}>
        <svg width="28" height="28" viewBox="0 0 28 28">
          <rect x="1.2" y="1.2" width="25.6" height="11" rx="5.5" fill="none" stroke="#f1eff6" strokeWidth="2.2" />
          <circle cx="7" cy="6.7" r="3.6" fill="#f1eff6" />
          <rect y="15.5" width="28" height="12.5" rx="6.2" fill="#f1eff6" />
          <circle cx="21.5" cy="21.7" r="3.6" fill="#70508e" />
        </svg>
      </TrayItem>
      <TrayItem $w={28} $gap={36}>
        <svg width="28" height="28" viewBox="0 0 28 28">
          <circle cx="14" cy="14" r="13.5" fill="#2c3a5e" />
          <path d="M14 14C8 4 3 8 2 14s4 10 9 12z" fill="#c02a5c" />
          <path d="M14 14c2 8 6 11 9 8s4-9 2-13z" fill="#2a8fd0" />
          <path d="M5 6c6-6 14-4 18 1-6 1-12 3-18-1z" fill="#2f8f78" />
          <circle cx="14.5" cy="14" r="5" fill="#e8f4fb" opacity=".8" />
        </svg>
      </TrayItem>
      <TrayItem $w={156} $gap={34}>
        Tue 16 May
      </TrayItem>
      <TrayItem $w={99} $ls={0.44}>
        1:52 PM
      </TrayItem>
    </StatusTray>
  </MenuBar>
);

const BrowserTab = ({ active, title, arabic }) => (
  <Tab $active={active}>
    <PlayLogo w={28} h={31} />
    <TabTitle $fade={active}>
      {title}
      {arabic}
    </TabTitle>
    <CloseX />
  </Tab>
);

const BrowserChrome = () => (
  <>
    <TabStrip>
      <Lights>
        <Light $c="#fe4a47" />
        <Light $c="#ffae16" />
        <Light $c="#3cc22c" />
      </Lights>
      <BrowserTab active title="Publishing overview | Repair | " arabic="ريبير" />
      <BrowserTab title="Dashboard | Repair | " arabic="ريبير" />
      <TabDivider />
      <NewTab>
        <svg width="26" height="26" viewBox="0 0 26 26" stroke="#fff" strokeWidth="4">
          <path d="M13 1v24M1 13h24" />
        </svg>
      </NewTab>
      <ChevronSlot>
        <svg width="20" height="13" viewBox="0 0 20 13" fill="none" stroke="#fff" strokeWidth="3">
          <path d="M1.5 1.5l8.5 8.5 8.5-8.5" />
        </svg>
      </ChevronSlot>
    </TabStrip>
    <Toolbar>
      <ToolIcon>
        <svg width="28" height="26" viewBox="0 0 28 26" fill="none" stroke="#fff" strokeWidth="3">
          <path d="M27 13H3M14 1.5 2.5 13 14 24.5" />
        </svg>
      </ToolIcon>
      <ToolIcon $dim>
        <svg width="28" height="26" viewBox="0 0 28 26" fill="none" stroke="#fff" strokeWidth="3">
          <path d="M1 13h24M14 1.5 25.5 13 14 24.5" />
        </svg>
      </ToolIcon>
      <ToolIcon>
        <svg width="30" height="28" viewBox="0 0 30 28" fill="none" stroke="#fff" strokeWidth="3.2">
          <path d="M25.5 18.5A11.5 11.5 0 1 1 24 7" />
          <path d="M28 0v11.5H17z" fill="#fff" stroke="none" />
        </svg>
      </ToolIcon>
      <Omnibox>
        <svg width="17" height="22" viewBox="0 0 17 22">
          <path d="M4.5 8V5.5a4 4 0 0 1 8 0V8" fill="none" stroke="#a8a0a4" strokeWidth="2.2" />
          <rect y="7.5" width="17" height="14" rx="2" fill="#a8a0a4" />
        </svg>
        <Url>
          <b>play.google.com</b>/console/u/0/developers/8981859483370883165/app/4974428875809272904/publishing
        </Url>
        <OmniIcon>
          <svg width="26" height="26" viewBox="0 0 26 26" fill="none" stroke="#b9a9b0" strokeWidth="2.6">
            <circle cx="10" cy="10" r="7.5" />
            <path d="M15.5 15.5l9 9" />
          </svg>
        </OmniIcon>
        <OmniIcon>
          <svg width="24" height="30" viewBox="0 0 24 30" fill="none" stroke="#b9a9b0" strokeWidth="2.4">
            <path d="M7 11H4a2 2 0 0 0-2 2v13a2 2 0 0 0 2 2h16a2 2 0 0 0 2-2V13a2 2 0 0 0-2-2h-3M12 20V3M7 7.5l5-5 5 5" />
          </svg>
        </OmniIcon>
        <OmniIcon>
          <svg width="30" height="30" viewBox="0 0 30 30" fill="none" stroke="#b9a9b0" strokeWidth="2.4">
            <path d="M15 3l3.5 8.3 9 .8-6.8 5.9 2 8.8L15 22.100l-7.700 4.700 2-8.800-6.800-5.900 9-.8z" />
          </svg>
        </OmniIcon>
      </Omnibox>
      <ToolIcon>
        <svg width="28" height="28" viewBox="0 0 28 28" fill="#fff">
          <path fillRule="evenodd" d="M0 0h28v28H0zM4 4v20h14V4z" />
        </svg>
      </ToolIcon>
      <ProfileDot>
        <RepairMark size={44} />
      </ProfileDot>
      <svg width="8" height="28" viewBox="0 0 8 28" fill="#fff">
        <circle cx="4" cy="4" r="3.2" />
        <circle cx="4" cy="14" r="3.2" />
        <circle cx="4" cy="24" r="3.2" />
      </svg>
    </Toolbar>
  </>
);

const SideNav = () => (
  <Sidebar>
    <BrandRow>
      <Glyph>
        <path d={P.menu} />
      </Glyph>
      <LogoSlot>
        <PlayLogo w={46} h={50} />
      </LogoSlot>
      <Brand>
        Google Play <span>Console</span>
      </Brand>
    </BrandRow>
    <AllApps>
      <Stroke>
        <path d="M21 12H4.5M10 6l-6 6 6 6" />
      </Stroke>
      All apps
    </AllApps>
    {NAV_TOP.map(([label, icon, ls]) => (
      <NavItem key={label} $ls={ls}>
        <CaretSlot />
        <IconSlot>{NAV_ICONS[icon]}</IconSlot>
        <NavLabel>{label}</NavLabel>
      </NavItem>
    ))}
    <FocusRing>
      <NavItem $active>
        <CaretSlot />
        <IconSlot>{NAV_ICONS.publish}</IconSlot>
        <NavLabel>Publishing overview</NavLabel>
      </NavItem>
    </FocusRing>
    <NavDivider />
    <NavHeading>Release</NavHeading>
    {NAV_RELEASE.map(({ label, icon, open, closed, ls }) => (
      <NavItem key={label} $ls={ls}>
        <CaretSlot>{open && <CaretDown />}</CaretSlot>
        <IconSlot>
          {icon && NAV_ICONS[icon]}
          {closed && <CaretRight />}
        </IconSlot>
        <NavLabel>{label}</NavLabel>
      </NavItem>
    ))}
  </Sidebar>
);

const ErrorIcon = () => (
  <Glyph color="#c9161d">
    <path d={P.error} />
  </Glyph>
);

const Content = () => (
  <Main>
    <TopBar>
      <SearchBox>
        <Glyph>
          <path d={P.search} />
        </Glyph>
        Search Play Console
      </SearchBox>
      <HeaderIcon>
        <Glyph>
          <path d={P.link} />
        </Glyph>
      </HeaderIcon>
      <HeaderIcon $gap={48}>
        <Glyph>
          <path d={P.help} />
        </Glyph>
      </HeaderIcon>
      <AppChip>
        <AppTile>
          <RepairMark size={72} />
        </AppTile>
        <AppName>Repair | ريبير</AppName>
      </AppChip>
      <Avatar>
        <svg width="62" height="62" viewBox="0 0 62 62">
          <circle cx="31" cy="31" r="31" fill="#d9d9d9" />
          <circle cx="31" cy="21" r="7.5" fill="#b0b0b0" />
          <path d="M14 42c2-6 9-9 17-9s15 3 17 9c-4 5-10 8-17 8s-13-3-17-8z" fill="#b0b0b0" />
        </svg>
      </Avatar>
    </TopBar>

    <Title>Publishing overview</Title>
    <Text $mt={19}>
      See an overview of the changes made to your app, and control when changes are sent for review or published.
      <Link $ml={15} $ls={-0.62}>
        Show more
      </Link>
    </Text>
    <Rule $mt={33} />

    <Notice>
      <ErrorIcon />
      <NoticeBody>
        <Text $dark>
          {"We will soon take action because your app does not adhere to Google Play Developer\nProgram policies. Fix violations as soon as possible."}
        </Text>
        <Link $ls={0.06}>Go to Policy status</Link>
      </NoticeBody>
    </Notice>

    <SectionRow $mt={43}>
      <SmallHeading>Managed publishing</SmallHeading>
      <Link $ls={-0.2}>Turn on managed publishing</Link>
    </SectionRow>
    <StatusLine>
      <Glyph size={40} color="#0b3f6e">
        <path d={P.syncOff} />
      </Glyph>
      <Text>Managed publishing off</Text>
    </StatusLine>
    <Text $mt={28}>
      When you send your changes to Google for review, they'll be published automatically as soon as they're approved
    </Text>
    <Rule $mt={49} />

    <Notice $single>
      <ErrorIcon />
      <NoticeBody $row>
        <Text $dark>We found issues with your app</Text>
        <Link $ls={0.06}>Go to Policy status</Link>
      </NoticeBody>
    </Notice>

    <SectionRow $mt={47} $align="flex-start">
      <SectionTitle>
        Changes in review
        <Glyph size={36} color="#5f6368">
          <path d={P.help} />
        </Glyph>
      </SectionTitle>
      <Actions>
        <Link $ls={-0.2}>Remove changes</Link>
        <Hide>Hide</Hide>
        <svg width="26" height="16" viewBox="0 0 26 16" fill="none" stroke={GREY} strokeWidth="3">
          <path d="M1.5 14 13 2.5 24.5 14" />
        </svg>
      </Actions>
    </SectionRow>

    <Table>
      <TableHead>
        <span>Item changed</span>
        <span>Description</span>
      </TableHead>
      <GroupRow>
        <Stroke>
          <path d="M12 3.1 5 5.7v5.5c0 4.5 2.9 8.6 7 9.8 4.1-1.2 7-5.3 7-9.8V5.7z" />
          <path d="M8.2 11.8l2.8 2.7 5-5" />
        </Stroke>
        App content
      </GroupRow>
      <DataRow>
        <Text $dark>Data safety</Text>
        <Text $dark>Complete Data safety questionnaire</Text>
        <Stroke color={BLUE} w={2.2}>
          <path d="M4 12h15M13.5 6.5 19 12l-5.5 5.5" />
        </Stroke>
      </DataRow>
    </Table>

    <Footer>
      {FOOTER.map(([label, w]) => (
        <FooterItem key={label} $w={w}>
          {label}
        </FooterItem>
      ))}
    </Footer>
  </Main>
);

const Dock = () => (
  <DockBar>
    {DOCK.map(([Icon, running], i) => (
      <DockSlot key={i}>
        <Icon />
        {running && <RunningDot />}
      </DockSlot>
    ))}
    <DockDivider />
    <DockSlot>
      <Trash />
    </DockSlot>
  </DockBar>
);

export default function App() {
  return (
    <Desktop>
      <GlobalStyle />
      <SystemMenu />
      <WindowShadow>
        <BrowserWindow>
          <BrowserChrome />
          <Page>
            <SideNav />
            <Content />
            <ScrollThumb />
          </Page>
          <StatusBubble>
            https://play.google.com/console/u/0/developers/8981859483370883165/app/4974428875809...
          </StatusBubble>
        </BrowserWindow>
      </WindowShadow>
      <Highlight />
      <Dock />
    </Desktop>
  );
}
